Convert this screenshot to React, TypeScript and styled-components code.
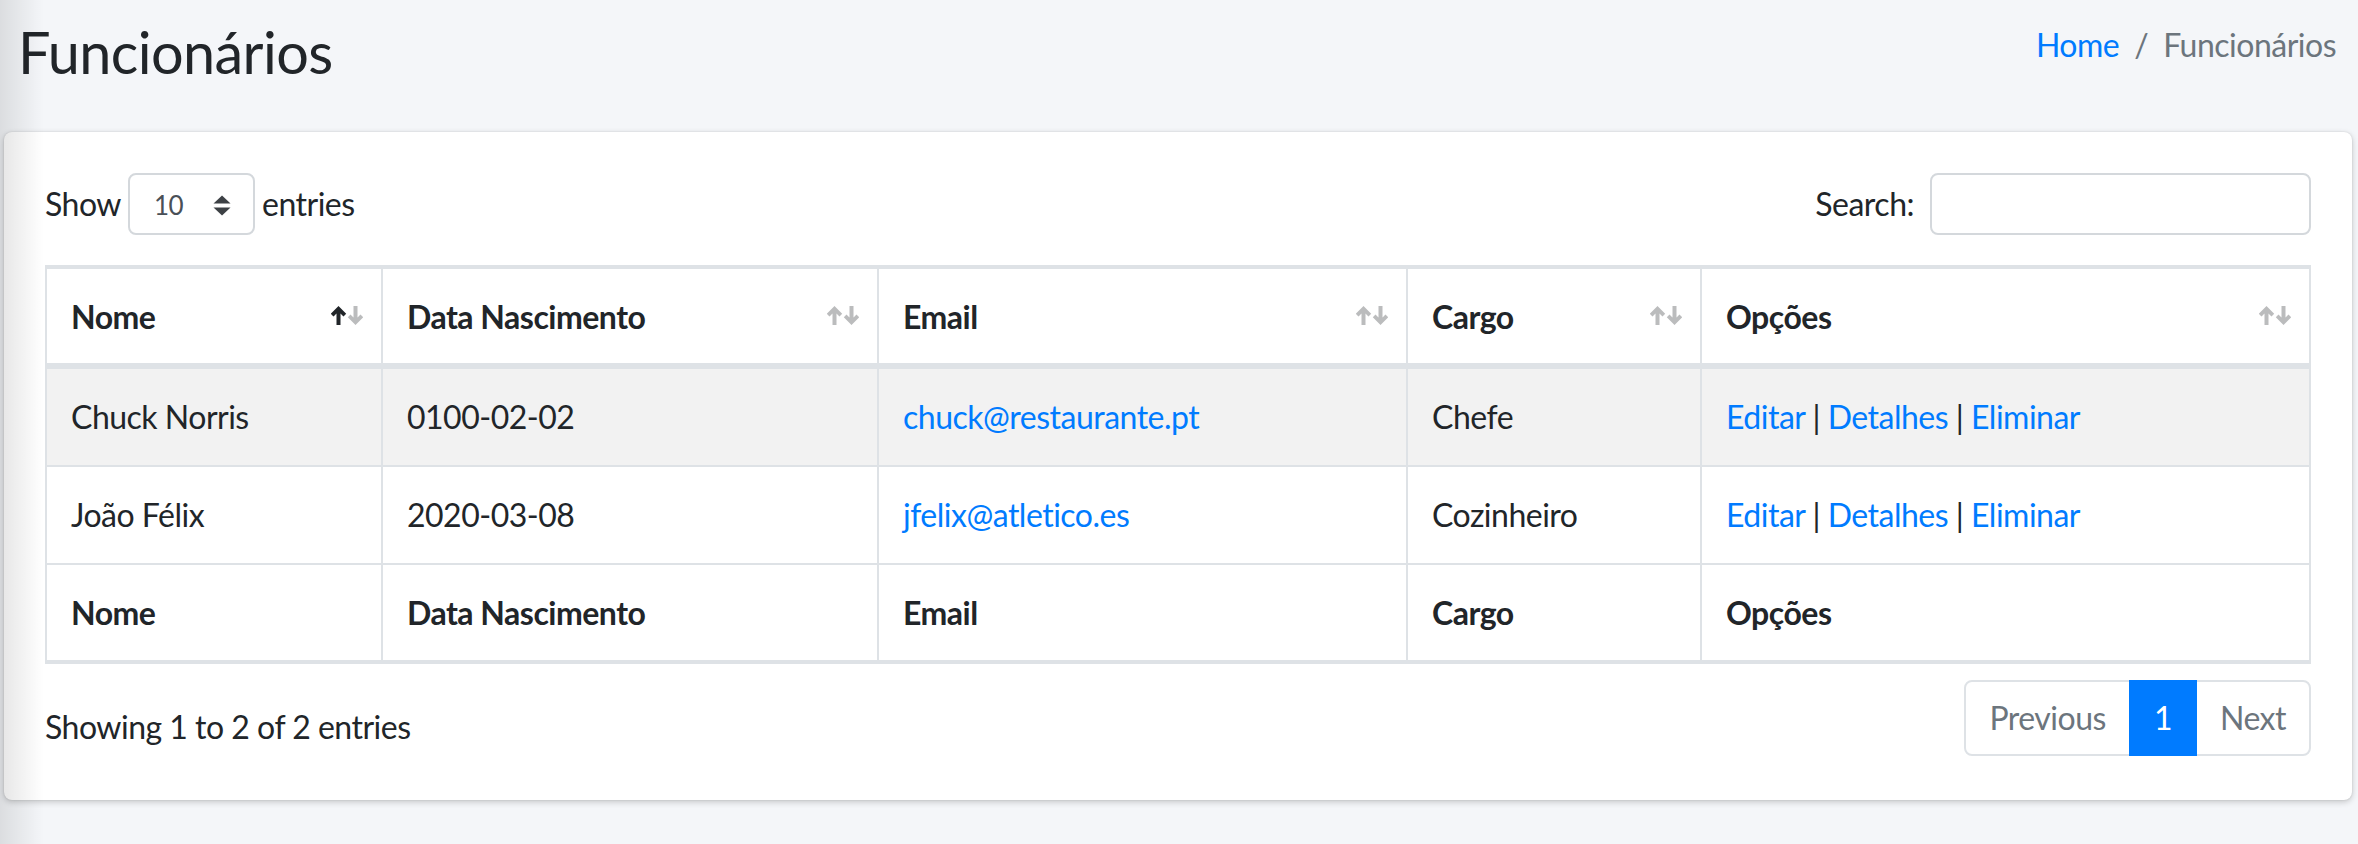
import React from 'react';
import styled, {createGlobalStyle} from 'styled-components';

type SortDir = 'asc' | 'desc' | 'none';

type Column = {
  label: string;
  width: number;
  sort: SortDir;
};

type Employee = {
  nome: string;
  nascimento: string;
  email: string;
  cargo: string;
};

const columns: Column[] = [
  {label: 'Nome', width: 336, sort: 'asc'},
  {label: 'Data Nascimento', width: 496, sort: 'none'},
  {label: 'Email', width: 529, sort: 'none'},
  {label: 'Cargo', width: 294, sort: 'none'},
  {label: 'Opções', width: 609, sort: 'none'},
];

const employees: Employee[] = [
  {
    nome: 'Chuck Norris',
    nascimento: '0100-02-02',
    email: 'chuck@restaurante.pt',
    cargo: 'Chefe',
  },
  {
    nome: 'João Félix',
    nascimento: '2020-03-08',
    email: 'jfelix@atletico.es',
    cargo: 'Cozinheiro',
  },
];

const ARROW_ON = '#212529';
const ARROW_OFF = '#bbbcbd';

// arrows drawn like the datatables ↑↓ pseudo glyphs
const SortArrows = ({dir}: {dir: SortDir}) => (
  <ArrowsSvg width="32" height="19" viewBox="0 0 32 19">
    <path
      d="M7.5 0 L15.2 7.8 L12.5 10.5 L9.5 7.4 V19 H5.5 V7.4 L2.5 10.5 L-0.2 7.8 Z"
      fill={dir === 'asc' ? ARROW_ON : ARROW_OFF}
    />
    <path
      d="M24.5 19 L32.2 11.2 L29.5 8.5 L26.5 11.6 V0 H22.5 V11.6 L19.5 8.5 L16.8 11.2 Z"
      fill={dir === 'desc' ? ARROW_ON : ARROW_OFF}
    />
  </ArrowsSvg>
);

const SelectArrows = () => (
  <svg width="18" height="21" viewBox="0 0 18 21">
    <path d="M9 0.5 L17.5 8.5 H0.5 Z" fill="#3d4145" />
    <path d="M0.5 12.5 H17.5 L9 20.5 Z" fill="#3d4145" />
  </svg>
);

export default function App() {
  return (
    <>
      <GlobalStyle />
      <Page>
        <ContentHeader>
          <Title>Funcionários</Title>
          <Breadcrumb>
            <Crumb>
              <CrumbLink href="#">Home</CrumbLink>
            </Crumb>
            <CrumbSep>/</CrumbSep>
            <Crumb $active>Funcionários</Crumb>
          </Breadcrumb>
        </ContentHeader>

        <Card>
          <Toolbar>
            <LengthLabel>
              Show
              <SelectBox>
                <Select defaultValue="10">
                  <option value="10">10</option>
                  <option value="25">25</option>
                  <option value="50">50</option>
                  <option value="100">100</option>
                </Select>
                <SelectArrows />
              </SelectBox>
              entries
            </LengthLabel>
            <SearchLabel>
              Search:
              <SearchInput type="search" />
            </SearchLabel>
          </Toolbar>

          <Table>
            <colgroup>
              {columns.map((c) => (
                <col key={c.label} style={{width: c.width}} />
              ))}
            </colgroup>
            <thead>
              <tr>
                {columns.map((c) => (
                  <HeadCell key={c.label}>
                    <HeadInner>
                      <span>{c.label}</span>
                      <SortArrows dir={c.sort} />
                    </HeadInner>
                  </HeadCell>
                ))}
              </tr>
            </thead>
            <tbody>
              {employees.map((e, i) => (
                <BodyRow key={e.email} $striped={i % 2 === 0}>
                  <BodyCell>{e.nome}</BodyCell>
                  <BodyCell>{e.nascimento}</BodyCell>
                  <BodyCell>
                    <Link href="#">{e.email}</Link>
                  </BodyCell>
                  <BodyCell>{e.cargo}</BodyCell>
                  <BodyCell>
                    <Link href="#">Editar</Link> | <Link href="#">Detalhes</Link> |{' '}
                    <Link href="#">Eliminar</Link>
                  </BodyCell>
                </BodyRow>
              ))}
            </tbody>
            <tfoot>
              <tr>
                {columns.map((c) => (
                  <FootCell key={c.label}>{c.label}</FootCell>
                ))}
              </tr>
            </tfoot>
          </Table>

          <TableFooter>
            <Info>Showing 1 to 2 of 2 entries</Info>
            <Pagination>
              <PageItem>
                <PageLink $first>Previous</PageLink>
              </PageItem>
              <PageItem>
                <PageLink $active>1</PageLink>
              </PageItem>
              <PageItem>
                <PageLink $last>Next</PageLink>
              </PageItem>
            </Pagination>
          </TableFooter>
        </Card>
      </Page>
    </>
  );
}

const GlobalStyle = createGlobalStyle`
  html, body {
    margin: 0;
    padding: 0;
  }
  body {
    background: #f4f6f9;
    font-family: Lato, "Liberation Sans", sans-serif;
    font-size: 32px;
    line-height: 1.5;
    letter-spacing: -0.5px;
    color: #212529;
  }
  *, *::before, *::after {
    box-sizing: border-box;
  }
`;

const Page = styled.div`
  position: relative;
  height: 844px;
  padding: 0 6px 0 4px;
  overflow: hidden;

  /* shadow thrown by the (hidden) sidebar on the left */
  &::after {
    content: '';
    position: absolute;
    top: 0;
    bottom: 0;
    left: 0;
    width: 44px;
    background: linear-gradient(to right, rgba(0, 0, 0, 0.1), rgba(0, 0, 0, 0));
    pointer-events: none;
  }
`;

const ContentHeader = styled.div`
  display: flex;
  justify-content: space-between;
  align-items: flex-start;
  height: 132px;
  padding: 17px 16px 0 14px;
`;

const Title = styled.h1`
  margin: 0;
  font-size: 57.6px;
  font-weight: 400;
  line-height: 1.2;
  letter-spacing: -0.6px;
  color: #212529;
`;

const Breadcrumb = styled.ol`
  display: flex;
  margin: 4px 0 0;
  padding: 0;
  list-style: none;
  font-size: 32px;
  line-height: 48px;
`;

const Crumb = styled.li<{$active?: boolean}>`
  color: ${(p) => (p.$active ? '#6c757d' : '#007bff')};
`;

const CrumbSep = styled.li`
  padding: 0 15px;
  color: #6c757d;
`;

const CrumbLink = styled.a`
  color: #007bff;
  text-decoration: none;
`;

const Card = styled.div`
  background: #fff;
  border-radius: 8px;
  box-shadow: 0 0 2px rgba(0, 0, 0, 0.125), 0 2px 6px rgba(0, 0, 0, 0.2);
  padding: 41px 41px 40px;
`;

const Toolbar = styled.div`
  display: flex;
  justify-content: space-between;
  align-items: center;
  height: 62px;
  margin-bottom: 30px;
`;

const LengthLabel = styled.label`
  display: flex;
  align-items: center;
  gap: 7px;
`;

const SelectBox = styled.span`
  display: flex;
  align-items: center;
  justify-content: space-between;
  width: 127px;
  height: 62px;
  padding: 2px 22px 0 24px;
  border: 2px solid #d4d8dc;
  border-radius: 8px;
  background: #fff;
`;

const Select = styled.select`
  appearance: none;
  border: 0;
  background: transparent;
  padding: 0;
  font-family: inherit;
  font-size: 26px;
  letter-spacing: -0.5px;
  color: #495057;
  outline: none;
`;

const SearchLabel = styled.label`
  display: flex;
  align-items: center;
  gap: 16px;
`;

const SearchInput = styled.input`
  width: 381px;
  height: 62px;
  border: 2px solid #d4d8dc;
  border-radius: 8px;
  padding: 0 16px;
  font-family: inherit;
  font-size: 28px;
  outline: none;
`;

const Table = styled.table`
  width: 100%;
  table-layout: fixed;
  border-collapse: separate;
  border-spacing: 0;
  border: 2px solid #dee2e6;
  border-right-width: 0;
`;

const HeadCell = styled.th`
  padding: 24px 18px 22px 24px;
  border-top: 2px solid #dee2e6;
  border-right: 2px solid #dee2e6;
  border-bottom: 4px solid #dee2e6;
  text-align: left;
  font-weight: 700;
  line-height: 48px;
  vertical-align: middle;
`;

const HeadInner = styled.div`
  display: flex;
  align-items: center;
  justify-content: space-between;
`;

const ArrowsSvg = styled.svg`
  flex: none;
  margin-bottom: 4px;
`;

const BodyRow = styled.tr<{$striped: boolean}>`
  background: ${(p) => (p.$striped ? '#f2f2f2' : '#fff')};
`;

const BodyCell = styled.td`
  padding: 24px;
  border-top: 2px solid #dee2e6;
  border-right: 2px solid #dee2e6;
  line-height: 48px;
  white-space: nowrap;
`;

const FootCell = styled.th`
  padding: 24px 24px 23px;
  border-top: 2px solid #dee2e6;
  border-right: 2px solid #dee2e6;
  border-bottom: 2px solid #dee2e6;
  text-align: left;
  font-weight: 700;
  line-height: 48px;
`;

const Link = styled.a`
  color: #007bff;
  text-decoration: none;
`;

const TableFooter = styled.div`
  display: flex;
  justify-content: space-between;
  align-items: flex-start;
  margin-top: 12px;
`;

const Info = styled.div`
  padding-top: 27px;
  line-height: 48px;
`;

const Pagination = styled.ul`
  display: flex;
  margin: 4px 0;
  padding: 0;
  list-style: none;
`;

const PageItem = styled.li`
  & + & {
    margin-left: -2px;
  }
`;

const PageLink = styled.span<{$active?: boolean; $first?: boolean; $last?: boolean}>`
  display: block;
  padding: 16px 23px;
  line-height: 40px;
  border: 2px solid ${(p) => (p.$active ? '#007bff' : '#dee2e6')};
  background: ${(p) => (p.$active ? '#007bff' : '#fff')};
  color: ${(p) => (p.$active ? '#fff' : '#6c757d')};
  border-radius: ${(p) => (p.$first ? '8px 0 0 8px' : p.$last ? '0 8px 8px 0' : '0')};
  position: relative;
  z-index: ${(p) => (p.$active ? 1 : 0)};
`;
